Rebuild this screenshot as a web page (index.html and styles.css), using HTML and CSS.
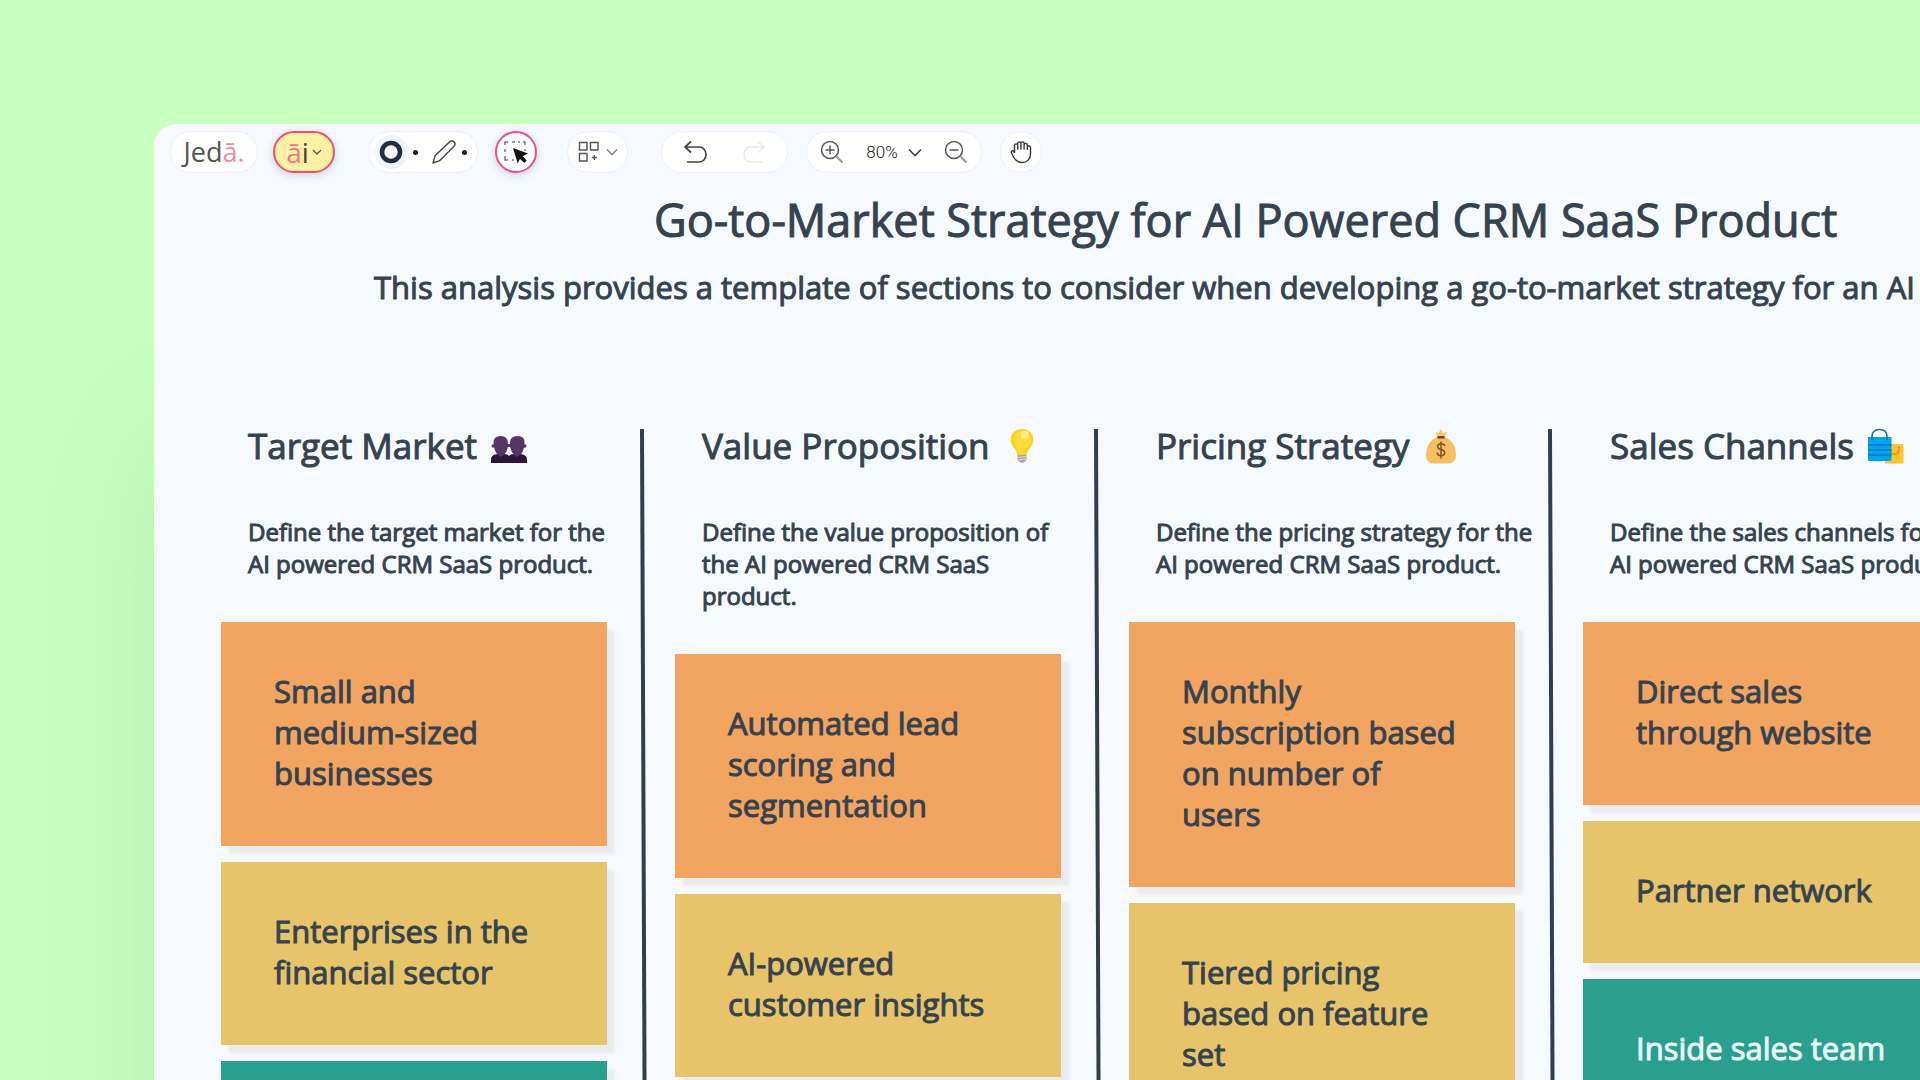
FILE: index.html
```html
<!DOCTYPE html>
<html lang="en">
<head>
<meta charset="utf-8">
<title>Go-to-Market Strategy</title>
<link rel="stylesheet" href="styles.css">
</head>
<body>
<main class="panel">
  <nav class="toolbar" aria-label="Board tools">
    <a class="pill logo" href="#">Jed<span class="accent">ā.</span></a>
    <button class="pill ai" type="button"><span><span class="accent">ā</span>i</span>
      <svg width="10" height="8" viewBox="0 0 10 8"><path d="M1 2l4 4 4-4" fill="none" stroke="#555" stroke-width="1.3"/></svg>
    </button>
    <div class="pill shapes">
      <button class="tool halo" type="button" aria-label="Shape"><svg width="24" height="24" viewBox="0 0 24 24"><circle cx="12" cy="12" r="9" fill="#fafbfd" stroke="#242c44" stroke-width="4.6"/></svg></button>
      <span class="dot"></span>
      <button class="tool pencil" type="button" aria-label="Pencil"><svg width="26" height="26" viewBox="0 0 26 26"><path d="M2 24l2.200-7.400L18.500 3c1.600-1.500 3.600-1.200 4.700 0s1 3-.4 4.400L8.800 21.600z" fill="none" stroke="#444" stroke-width="1.400" stroke-linejoin="round"/></svg></button>
      <span class="dot"></span>
    </div>
    <button class="pill select" type="button" aria-label="Select">
      <svg width="26" height="26" viewBox="0 0 26 26"><path d="M2 6V3h3M9 3h3M15 3h2M20 3h2v3M2 10v3M2 17v4h3M9 21h2M22 10v2" fill="none" stroke="#777" stroke-width="1.500"/><path d="M10 9l15 5.600-5.400 2.600 4.200 4.200-2.600 2.600-4.200-4.300-2.300 4.700z" fill="#151515"/></svg>
    </button>
    <button class="pill apps" type="button" aria-label="Templates">
      <svg width="22" height="22" viewBox="0 0 22 22" fill="none" stroke="#555" stroke-width="1.400"><path d="M1.500 1.500h7.500v7.500h-7.500zM12.500 1.500h7.500v7.500h-7.500zM1.500 12.500h7.500v7.500h-7.500zM16.300 14v5M13.800 16.500h5"/></svg>
      <svg width="12" height="8" viewBox="0 0 12 8"><path d="M1 1.500l5 5 5-5" fill="none" stroke="#777" stroke-width="1.300"/></svg>
    </button>
    <div class="pill history">
      <button class="tool" type="button" aria-label="Undo"><svg width="24" height="24" viewBox="0 0 24 24"><path d="M8 1.500L2 7l6 5.500M2 7h14.500a6.500 7.500 0 0 1 0 15H4" fill="none" stroke="#444" stroke-width="1.700"/></svg></button>
      <button class="tool" type="button" aria-label="Redo"><svg width="24" height="24" viewBox="0 0 24 24"><path d="M16 1.500L22 7l-6 5.500M22 7H8.500a6.500 7.500 0 0 0 0 15H20" fill="none" stroke="#eaeaea" stroke-width="1.500"/></svg></button>
    </div>
    <div class="pill zoom">
      <button class="tool" type="button" aria-label="Zoom in"><svg width="24" height="24" viewBox="0 0 24 24" fill="none" stroke="#555" stroke-width="1.500"><circle cx="10" cy="10" r="8.500"/><path d="M10 5.500v9M5.500 10h9"/><path d="M16.500 16.500l6 6" stroke="#999" stroke-width="2"/></svg></button>
      <button class="tool level" type="button">80% <svg width="14" height="9" viewBox="0 0 14 9"><path d="M1 1.500l6 6 6-6" fill="none" stroke="#444" stroke-width="1.600"/></svg></button>
      <button class="tool" type="button" aria-label="Zoom out"><svg width="24" height="24" viewBox="0 0 24 24" fill="none" stroke="#555" stroke-width="1.500"><circle cx="10" cy="10" r="8.500"/><path d="M5.500 10h9"/><path d="M16.500 16.500l6 6" stroke="#999" stroke-width="2"/></svg></button>
    </div>
    <button class="pill hand" type="button" aria-label="Pan">
      <svg width="22" height="24" viewBox="0 0 22 24"><path d="M4.500 13V5.500a1.600 1.600 0 0 1 3.200 0V9 3.500a1.600 1.600 0 0 1 3.200 0V9 3.500a1.600 1.600 0 0 1 3.200 0V9 5a1.600 1.600 0 0 1 3.200 0v5M17.300 7.500a1.600 1.600 0 0 1 3.200 0V14c0 5-3.500 8.500-8.500 8.500-4 0-6.500-1.800-8.500-5.500l-2-4c-.8-1.800 1-3 2.200-1.600l.8 1.600" fill="none" stroke="#333" stroke-width="1.400" stroke-linejoin="round"/></svg>
    </button>
  </nav>

  <header class="intro">
    <h1>Go-to-Market Strategy for AI Powered CRM SaaS Product</h1>
    <p>This analysis provides a template of sections to consider when developing a go-to-market strategy for an AI</p>
  </header>

  <div class="board">
    <section class="column">
      <div class="body">
        <h2>Target Market
          <svg width="36" height="36" viewBox="0 0 36 36"><g fill="#533566"><path d="M2.500 15Q2.500 8 9.500 8T17 15q.5 10-7 14Q3 26 2.500 15zM19 15q0-7 7.500-7t7 7q-.5 11-7 14-8-4-7.500-14zM6.500 24h7v6h-7zM22.500 24h7v6h-7zM16 16h4v3h-4z"/><circle cx="2.300" cy="18" r="1.800"/><circle cx="33.700" cy="18" r="1.800"/></g><path d="M0 35v-4q0-4 6-5l4 3 4-3q2.500 0 4 2 1.500-2 4-2l4 3 4-3q6 1 6 5v4z" fill="#2b173e"/></svg>
        </h2>
        <p class="about">Define the target market for the AI powered CRM SaaS product.</p>
        <div class="notes">
          <p class="note orange">Small and medium-sized businesses</p>
          <p class="note yellow">Enterprises in the financial sector</p>
          <div class="note teal"></div>
        </div>
      </div>
      <svg class="divider"><line x1="1" y1="0" x2="4" y2="100%"/></svg>
    </section>
    <section class="column">
      <div class="body">
        <h2>Value Proposition
          <svg width="36" height="36" viewBox="0 0 36 36"><path d="M18 1a11 11 0 0 0-11.300 11c0 6.500 6.600 9 6.600 15h9.400c0-6 6.600-8.500 6.600-15A11 11 0 0 0 18 1z" fill="#fcd116"/><path d="M18 2a9 9 0 0 0-8 9c0 5 5 9 5 15h4c1-6 7-8 8-14a9 9 0 0 0-9-10z" fill="#fddb3a"/><circle cx="21" cy="7" r="4" fill="#fff0a0" opacity=".8"/><path d="M13.500 27h9v5q-2 3-4.500 3t-4.500-3z" fill="#aaa6a3"/><path d="M13.500 29.500l9-1M13.500 32l9-1" stroke="#e2dfdc" stroke-width="1"/></svg>
        </h2>
        <p class="about">Define the value proposition of the AI powered CRM SaaS product.</p>
        <div class="notes">
          <p class="note orange">Automated lead scoring and segmentation</p>
          <p class="note yellow">AI-powered customer insights</p>
        </div>
      </div>
      <svg class="divider"><line x1="1" y1="0" x2="4" y2="100%"/></svg>
    </section>
    <section class="column">
      <div class="body">
        <h2>Pricing Strategy
          <svg width="36" height="36" viewBox="0 0 36 36"><path d="M12.500 4l3 1 2.500-4 2.500 4 3.500-1-2.500 6h-7z" fill="#fbc667"/><path d="M14 9q-11 5-11 18 0 8.500 8 8.500h14q8 0 8-8.500 0-13-11-18z" fill="#f8be62"/><path d="M14.500 8h7v2.500h-7z" fill="#6d3f35"/><path d="M22 18q-1-2.300-4-2.300t-3.500 2.500q0 2.500 3.500 3.300t3.800 3.500q-.3 2.700-3.800 2.700t-4-3M18 13.500v17" fill="none" stroke="#80502f" stroke-width="1.500"/></svg>
        </h2>
        <p class="about">Define the pricing strategy for the AI powered CRM SaaS product.</p>
        <div class="notes">
          <p class="note orange">Monthly subscription based on number of users</p>
          <p class="note yellow">Tiered pricing based on feature set</p>
        </div>
      </div>
      <svg class="divider"><line x1="1" y1="0" x2="4" y2="100%"/></svg>
    </section>
    <section class="column">
      <div class="body">
        <h2>Sales Channels
          <svg width="36" height="36" viewBox="0 0 36 36"><path d="M17 16h17q1.500 0 1.500 1.500V34q0 1.500-1.500 1.500H17z" fill="#fcc42e"/><path d="M22 18v4q0 4 4.500 4t4.500-4v-4" fill="none" stroke="#df911b" stroke-width="1.500"/><path d="M0 9h23.500v22.500q0 1.500-1.500 1.500H1.500Q0 33 0 31.500z" fill="#00a5ed"/><path d="M0 17h23.500M0 22h23.500M0 27h23.500" stroke="#0078c5" stroke-width="1.700"/><path d="M4 12V8.500Q4 1.500 11.500 1.500T19 8.500V12" fill="none" stroke="#197795" stroke-width="1.600"/></svg>
        </h2>
        <p class="about">Define the sales channels for the AI powered CRM SaaS product.</p>
        <div class="notes">
          <p class="note orange">Direct sales through website</p>
          <p class="note yellow">Partner network</p>
          <p class="note teal">Inside sales team</p>
        </div>
      </div>
    </section>
  </div>
</main>
</body>
</html>
```
FILE: styles.css
```css
* { box-sizing: border-box; }

body {
  margin: 0;
  height: 100vh;
  overflow: hidden;
  background: #c9ffc0;
  color: #35424f;
  font-family: "Open Sans", "Noto Sans", sans-serif;
  display: flex;
}

h1, h2, p { margin: 0; font-weight: 400; }

button, a {
  font: inherit;
  color: inherit;
  text-decoration: none;
}

svg { display: block; flex: none; }

.panel {
  flex: 1;
  min-width: 0;
  margin: 124px 0 0 154px;
  padding: 7px 0 0 16px;
  border-radius: 22px 0 0 0;
  background: #f6faff;
  box-shadow: 0 300px 140px rgba(60, 130, 50, 0.13);
  overflow: hidden;
}

/* Toolbar */
.toolbar { display: flex; }

.pill {
  display: flex;
  align-items: center;
  justify-content: center;
  height: 42px;
  padding: 0;
  border: 1px solid #edeff3;
  border-radius: 21px;
  background: #fff;
}

.tool {
  display: flex;
  align-items: center;
  justify-content: center;
  padding: 0;
  border: 0;
  background: none;
}

.logo { width: 88px; font-size: 27px; line-height: 38px; color: #555; }
.accent { color: #f58aa8; }

.ai {
  width: 62px;
  margin-left: 15px;
  gap: 3px;
  border: 2px solid #ea5364;
  background: #fff0a5;
  box-shadow: 0 2px 8px rgba(40, 50, 80, 0.2);
  font-size: 28px;
  line-height: 36px;
  color: #444;
}
.ai .accent { color: #f0787c; }

.shapes { width: 110px; margin-left: 33px; padding-right: 6px; gap: 5px; }
.pencil { margin-left: 8px; }
.halo { width: 34px; height: 34px; border-radius: 50%; background: #f0f3f8; }
.dot { width: 5px; height: 5px; border-radius: 50%; background: #222; }

.select {
  width: 42px;
  margin-left: 17px;
  border: 2px solid #ee4f84;
  box-shadow: 0 2px 8px rgba(40, 50, 80, 0.2);
}

.apps { width: 61px; margin-left: 30px; gap: 6px; }
.history { width: 127px; margin-left: 33px; gap: 35px; }
.zoom { width: 176px; margin-left: 18px; gap: 22px; }
.level {
  gap: 10px;
  font-family: Roboto, sans-serif;
  font-size: 17px;
  font-weight: 300;
  color: #222;
}
.hand { width: 42px; margin-left: 18px; }

.intro {
  padding: 15px 0 0 204px;
  white-space: nowrap;
  -webkit-text-stroke: 1px #35424f;
}
.intro h1 { padding-left: 280px; font-size: 45px; line-height: 64px; }
.intro p { margin-top: 13px; font-size: 31px; line-height: 44px; }

/* Columns */
.board {
  display: flex;
  gap: 28px;
  margin-top: 113px;
  padding-left: 51px;
}
.column { display: flex; flex: none; }
.body { width: 420px; }

h2 {
  display: flex;
  align-items: center;
  gap: 14px;
  padding-left: 27px;
  font-size: 35px;
  line-height: 48px;
  white-space: nowrap;
  -webkit-text-stroke: 1px #35424f;
}

.about {
  margin-top: 46px;
  padding: 0 8px 0 27px;
  font-size: 24px;
  line-height: 32px;
  -webkit-text-stroke: 1px #35424f;
}

.notes {
  display: flex;
  flex-direction: column;
  gap: 16px;
  width: 386px;
  margin-top: 42px;
}

.note {
  min-height: 142px;
  padding: 49px 56px 52px 53px;
  box-shadow: 8px 8px 3px #e9ebec;
  font-size: 31px;
  line-height: 41px;
  -webkit-text-stroke: 1px;
}
.orange { background: #f2a461; }
.yellow { background: #e7c46a; }
.teal { background: #2a9f90; color: #e8f8f5; }

.divider { width: 6px; height: auto; margin-top: 7px; overflow: visible; }
.divider line { stroke: #323d50; stroke-width: 4px; }
```
